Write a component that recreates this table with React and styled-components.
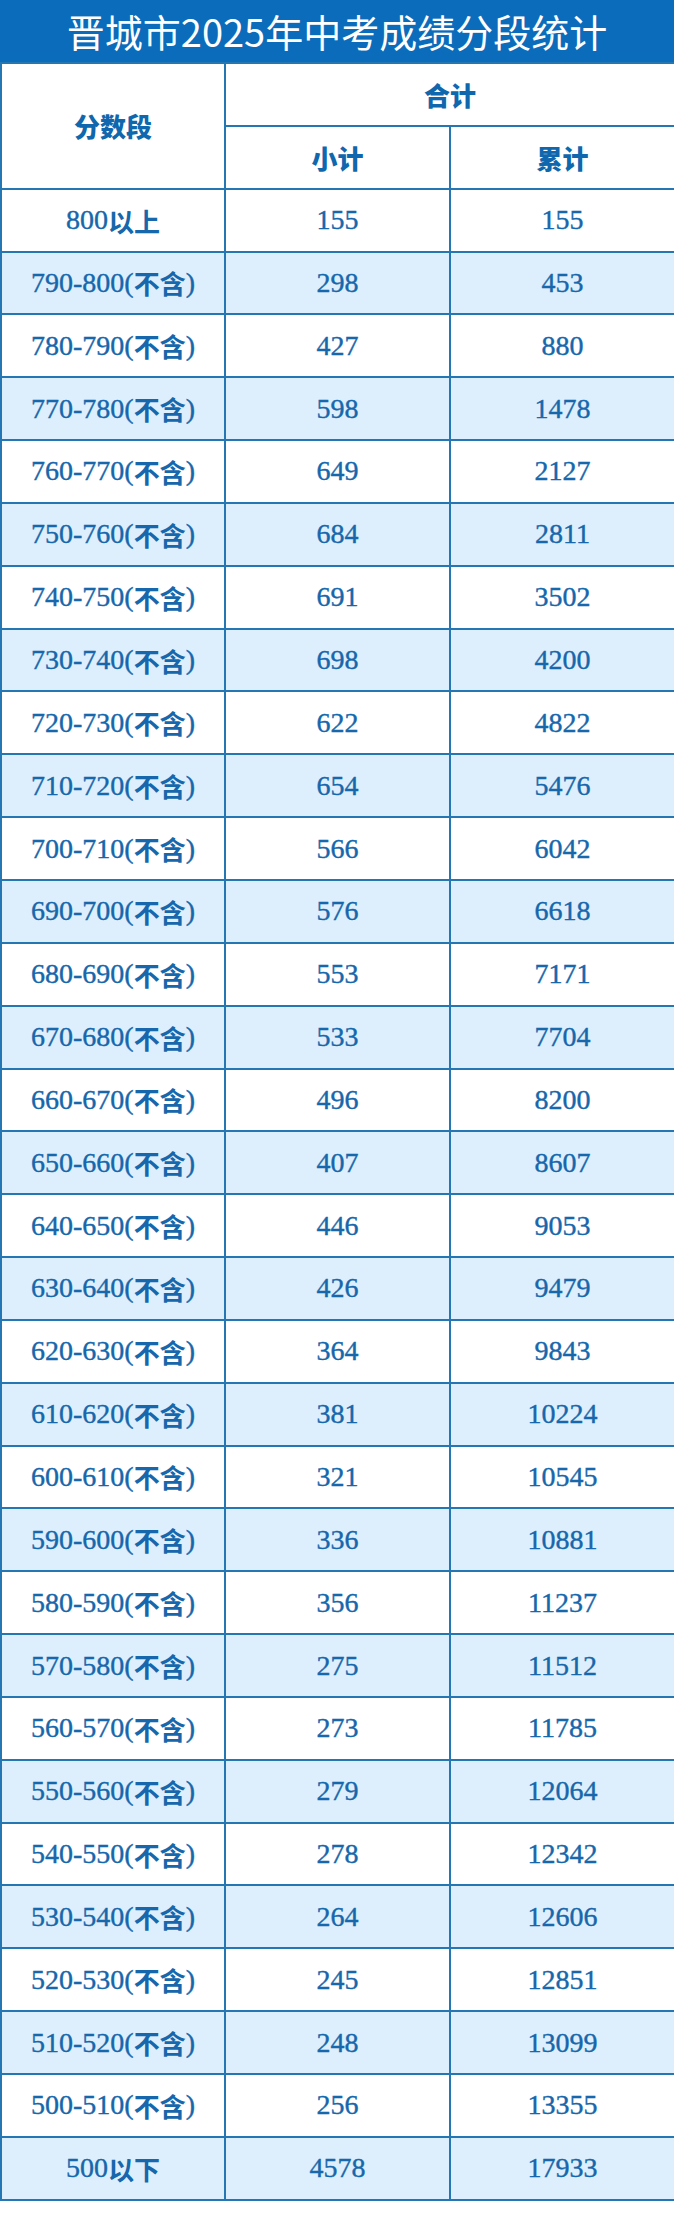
import React from 'react'
import styled, { createGlobalStyle } from 'styled-components'

const rows = [
  ['800', '以上', '', 155, 155],
  ['790-800(', '不含', ')', 298, 453],
  ['780-790(', '不含', ')', 427, 880],
  ['770-780(', '不含', ')', 598, 1478],
  ['760-770(', '不含', ')', 649, 2127],
  ['750-760(', '不含', ')', 684, 2811],
  ['740-750(', '不含', ')', 691, 3502],
  ['730-740(', '不含', ')', 698, 4200],
  ['720-730(', '不含', ')', 622, 4822],
  ['710-720(', '不含', ')', 654, 5476],
  ['700-710(', '不含', ')', 566, 6042],
  ['690-700(', '不含', ')', 576, 6618],
  ['680-690(', '不含', ')', 553, 7171],
  ['670-680(', '不含', ')', 533, 7704],
  ['660-670(', '不含', ')', 496, 8200],
  ['650-660(', '不含', ')', 407, 8607],
  ['640-650(', '不含', ')', 446, 9053],
  ['630-640(', '不含', ')', 426, 9479],
  ['620-630(', '不含', ')', 364, 9843],
  ['610-620(', '不含', ')', 381, 10224],
  ['600-610(', '不含', ')', 321, 10545],
  ['590-600(', '不含', ')', 336, 10881],
  ['580-590(', '不含', ')', 356, 11237],
  ['570-580(', '不含', ')', 275, 11512],
  ['560-570(', '不含', ')', 273, 11785],
  ['550-560(', '不含', ')', 279, 12064],
  ['540-550(', '不含', ')', 278, 12342],
  ['530-540(', '不含', ')', 264, 12606],
  ['520-530(', '不含', ')', 245, 12851],
  ['510-520(', '不含', ')', 248, 13099],
  ['500-510(', '不含', ')', 256, 13355],
  ['500', '以下', '', 4578, 17933],
]

const GlobalStyle = createGlobalStyle`
  body {
    margin: 0;
    background: #fff;
    font-family: "Noto Sans CJK SC", sans-serif;
  }
`

const Page = styled.div`
  width: 674px;
  height: 2222px;
  background: #fff;
`

const Title = styled.h1`
  margin: 0;
  height: 62px;
  background: #0b6cbb;
  color: #fff;
  font-family: "Noto Sans CJK SC", sans-serif;
  font-weight: 400;
  font-size: 38px;
  line-height: 62px;
  text-align: center;
`

const Grid = styled.div`
  display: grid;
  grid-template-columns: 222px 223px 1fr;
  grid-auto-rows: 60.85px;
  gap: 2px;
  padding: 2px 0 2px 2px;
  background: #2477b3;
`

const Cell = styled.div`
  display: flex;
  align-items: center;
  justify-content: center;
  background: ${p => (p.$shade ? '#ddeffd' : '#fff')};
  color: #1667ab;
  font-family: "Liberation Serif", "Noto Sans CJK SC", serif;
  font-size: 28px;
  -webkit-text-stroke: 0.4px #1667ab;
  white-space: nowrap;
`

const HeadCell = styled(Cell)`
  font-family: "Noto Sans CJK SC", sans-serif;
  font-weight: 900;
  font-size: 26px;
  -webkit-text-stroke: 0;
  color: #0f67ae;
  grid-row: ${p => p.$rowSpan ? `span ${p.$rowSpan}` : 'auto'};
  grid-column: ${p => p.$colSpan ? `span ${p.$colSpan}` : 'auto'};
`

const Cjk = styled.span`
  font-family: "Noto Sans CJK SC", sans-serif;
  font-weight: 700;
  font-size: 26px;
  -webkit-text-stroke: 0;
`

export default function App() {
  return (
    <Page>
      <GlobalStyle />
      <Title>晋城市2025年中考成绩分段统计</Title>
      <Grid>
        <HeadCell $rowSpan={2}>分数段</HeadCell>
        <HeadCell $colSpan={2}>合计</HeadCell>
        <HeadCell>小计</HeadCell>
        <HeadCell>累计</HeadCell>
        {rows.map(([pre, cjk, post, sub, total], i) => (
          <React.Fragment key={i}>
            <Cell $shade={i % 2 === 1}>
              {pre}
              <Cjk>{cjk}</Cjk>
              {post}
            </Cell>
            <Cell $shade={i % 2 === 1}>{sub}</Cell>
            <Cell $shade={i % 2 === 1}>{total}</Cell>
          </React.Fragment>
        ))}
      </Grid>
    </Page>
  )
}
